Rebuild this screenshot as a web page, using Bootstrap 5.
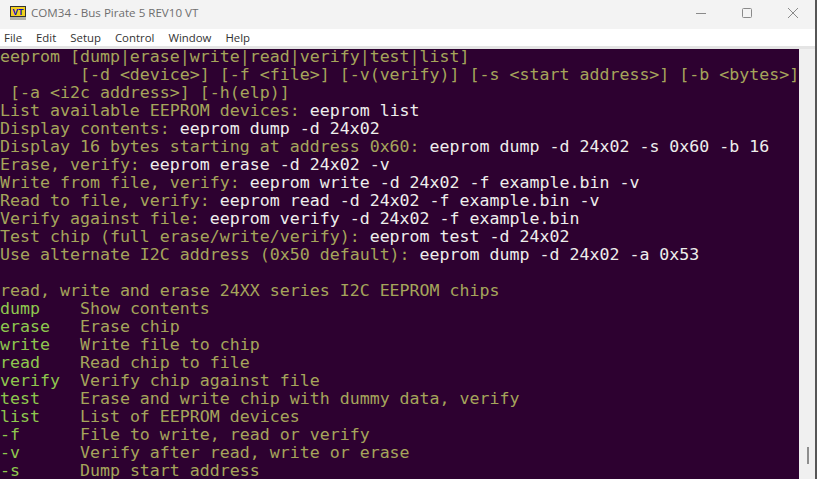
<!DOCTYPE html>
<html lang="en">
<head>
<meta charset="utf-8">
<title>COM34 - Bus Pirate 5 REV10 VT</title>
<link href="https://cdn.jsdelivr.net/npm/bootstrap@5.3.0/dist/css/bootstrap.min.css" rel="stylesheet">
<style>
html, body { height: 100%; margin: 0; overflow: hidden; background: #fff; }
.win-shell { width: 817px; height: 479px; border-right: 2px solid #565656; }
.win-title { height: 29px; background: #f3f3f3; padding: 0 0 4px 10px; gap: 5px; font-family: "Open Sans", "Noto Sans", sans-serif; color: #6f6f6f; }
.win-title-text { font-size: 11.6px; }
.win-ctrls { margin-right: -1px; }
.win-ctrl { width: 46px; height: 25px; }
.win-menu { height: 17px; background: #fff; padding-left: 4px; gap: 14px; font-family: "Open Sans", "Noto Sans", sans-serif; font-size: 11.4px; color: #333; }
.term-wrap { flex: 1 1 auto; min-height: 0; border-top: 3px solid #e4e4e4; }
.term { flex: 1 1 auto; background: #2d0130; overflow: hidden; font-family: "DejaVu Sans Mono", monospace; font-size: 16.6px; line-height: 16px; color: #a5a55b; }
.term-line { height: 18px; white-space: pre; }
.c-w { color: #eeeeec; }
.c-g { color: #8ec84e; }
.term-side { width: 16px; background: #f0f0f0; }
.term-thumb { width: 2px; height: 17px; background: #8e8e8e; margin: 0 0 15px 8px; }
</style>
</head>
<body>
<div class="win-shell d-flex flex-column">
  <div class="win-title d-flex align-items-center">
    <svg width="16" height="14" viewBox="0 0 16 14"><rect x="0.5" y="0.5" width="15" height="10" fill="#f4d020" stroke="#333"/><rect x="0" y="11" width="16" height="3" fill="#b4b4ac"/><text x="8" y="8.8" font-size="8.5" font-weight="bold" font-family="Liberation Sans" text-anchor="middle" fill="#0808c8">VT</text></svg>
    <span class="win-title-text flex-grow-1">COM34 - Bus Pirate 5 REV10 VT</span>
    <div class="win-ctrls d-flex">
      <div class="win-ctrl d-flex align-items-center justify-content-center"><svg width="12" height="12" viewBox="0 0 12 12"><path d="M1 6.5h10" stroke="#8a8a8a"/></svg></div>
      <div class="win-ctrl d-flex align-items-center justify-content-center"><svg width="12" height="12" viewBox="0 0 12 12"><rect x="1.5" y="1.5" width="9" height="9" rx="1" fill="none" stroke="#8a8a8a"/></svg></div>
      <div class="win-ctrl d-flex align-items-center justify-content-center"><svg width="12" height="12" viewBox="0 0 12 12"><path d="M1 1l10 10M11 1L1 11" stroke="#8a8a8a"/></svg></div>
    </div>
  </div>
  <div class="win-menu d-flex align-items-center">
    <span>File</span><span>Edit</span><span>Setup</span><span>Control</span><span>Window</span><span>Help</span>
  </div>
  <div class="term-wrap d-flex">
    <div class="term">
<div class="term-line">eeprom [dump|erase|write|read|verify|test|list]</div>
<div class="term-line">        [-d &lt;device&gt;] [-f &lt;file&gt;] [-v(verify)] [-s &lt;start address&gt;] [-b &lt;bytes&gt;]</div>
<div class="term-line"> [-a &lt;i2c address&gt;] [-h(elp)]</div>
<div class="term-line">List available EEPROM devices: <span class="c-w">eeprom list</span></div>
<div class="term-line">Display contents: <span class="c-w">eeprom dump -d 24x02</span></div>
<div class="term-line">Display 16 bytes starting at address 0x60: <span class="c-w">eeprom dump -d 24x02 -s 0x60 -b 16</span></div>
<div class="term-line">Erase, verify: <span class="c-w">eeprom erase -d 24x02 -v</span></div>
<div class="term-line">Write from file, verify: <span class="c-w">eeprom write -d 24x02 -f example.bin -v</span></div>
<div class="term-line">Read to file, verify: <span class="c-w">eeprom read -d 24x02 -f example.bin -v</span></div>
<div class="term-line">Verify against file: <span class="c-w">eeprom verify -d 24x02 -f example.bin</span></div>
<div class="term-line">Test chip (full erase/write/verify): <span class="c-w">eeprom test -d 24x02</span></div>
<div class="term-line">Use alternate I2C address (0x50 default): <span class="c-w">eeprom dump -d 24x02 -a 0x53</span></div>
<div class="term-line"> </div>
<div class="term-line">read, write and erase 24XX series I2C EEPROM chips</div>
<div class="term-line"><span class="c-g">dump</span>    Show contents</div>
<div class="term-line"><span class="c-g">erase</span>   Erase chip</div>
<div class="term-line"><span class="c-g">write</span>   Write file to chip</div>
<div class="term-line"><span class="c-g">read</span>    Read chip to file</div>
<div class="term-line"><span class="c-g">verify</span>  Verify chip against file</div>
<div class="term-line"><span class="c-g">test</span>    Erase and write chip with dummy data, verify</div>
<div class="term-line"><span class="c-g">list</span>    List of EEPROM devices</div>
<div class="term-line"><span class="c-g">-f</span>      File to write, read or verify</div>
<div class="term-line"><span class="c-g">-v</span>      Verify after read, write or erase</div>
<div class="term-line"><span class="c-g">-s</span>      Dump start address</div>
    </div>
    <div class="term-side d-flex flex-column justify-content-end"><div class="term-thumb"></div></div>
  </div>
</div>
<script src="https://cdn.jsdelivr.net/npm/bootstrap@5.3.0/dist/js/bootstrap.bundle.min.js"></script>
</body>
</html>
